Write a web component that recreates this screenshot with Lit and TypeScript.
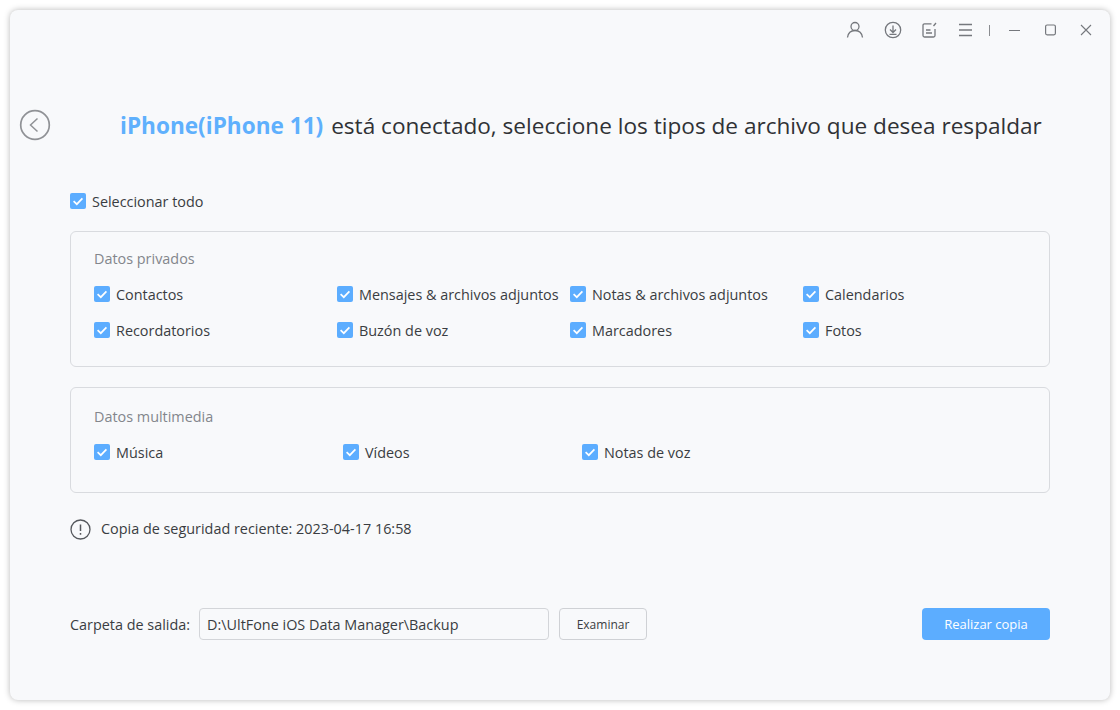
import { LitElement, html, css, svg } from "lit";
import { customElement } from "lit/decorators.js";

const check = (label: string, cls = "") => html`<label class="chk ${cls}">
  <span class="box"><svg width="16" height="16" viewBox="0 0 16 16"><path d="M3.6 8.2 6.8 11.2 12.4 5.4" fill="none" stroke="#fff" stroke-width="1.7"/></svg></span>
  <span>${label}</span>
</label>`;

const icon = (w: number, body: unknown) => html`<svg class="ic" width="${w}" height="20" viewBox="0 0 ${w} 20" fill="none" stroke="#75787d" stroke-width="1.3">${body}</svg>`;

@customElement("app-root")
export class AppRoot extends LitElement {
  static styles = css`
    :host { display: block; width: 1120px; height: 710px; background: #fff; padding: 10px; box-sizing: border-box;
      font-family: "Open Sans", "Noto Sans", sans-serif; color: #3a3d42; font-size: 14.4px; }
    .win { width: 1100px; height: 690px; background: #f8f9fb; border-radius: 8px; box-sizing: border-box;
      box-shadow: 0 0 6px rgba(0,0,0,.28); display: flex; flex-direction: column; padding: 0 60px; }
    .bar { height: 40px; display: flex; align-items: center; justify-content: flex-end; margin-right: -44px; }
    .bar .ic { display: block; }
    .u { margin-right: 19px; } .d { margin-right: 18px; } .n { margin-right: 20px; } .m { margin-right: 17px; }
    .sep { width: 1px; height: 11px; background: #8a8c90; margin-right: 19px; }
    .mn { margin-right: 25px; } .mx { margin-right: 21px; }
    .head { height: 62px; margin-top: 44px; display: flex; align-items: center; margin-left: -51px; }
    .back { flex: none; display: block; }
    .title { margin-left: 69px; font-size: 22.6px; white-space: nowrap; color: #303236; }
    .title b { font-weight: 700; color: #5fb0fd; margin-right: 2px; }
    .all { height: 20px; margin-top: 35px; }
    .chk { display: flex; align-items: center; gap: 6px; height: 20px; white-space: nowrap; }
    .box { width: 16px; height: 16px; background: #5cadff; border-radius: 2px; flex: none; display: block; }
    .box svg { display: block; }
    .card { border: 1px solid #d9dbdf; border-radius: 6px; padding: 0 23px; box-sizing: border-box; }
    .c1 { height: 136px; margin-top: 20px; }
    .c2 { height: 106px; margin-top: 20px; }
    .lbl { color: #83868c; height: 20px; line-height: 20px; margin-top: 17px; }
    .c2 .lbl { margin-top: 19px; }
    .row { display: flex; height: 20px; margin-top: 16px; }
    .lbl + .row { margin-top: 15px; }
    .c1 .chk:nth-child(1) { width: 243px; }
    .c1 .chk:nth-child(2), .c1 .chk:nth-child(3) { width: 233px; }
    .c2 .chk:nth-child(1) { width: 249px; }
    .c2 .chk:nth-child(2) { width: 239px; }
    .note { display: flex; align-items: center; gap: 10px; height: 22px; margin-top: 25px; }
    .note svg { display: block; }
    .note span { line-height: 20px; margin-bottom: 1px; }
    .foot { display: flex; align-items: center; height: 32px; margin-top: 68px; }
    .input { width: 350px; height: 32px; box-sizing: border-box; border: 1px solid #d3d5d9; border-radius: 4px; margin-left: 9px;
      padding-left: 7px; line-height: 32px; }
    .btn { width: 88px; height: 32px; box-sizing: border-box; border: 1px solid #cfd1d5; border-radius: 4px; margin-left: 10px;
      text-align: center; line-height: 31px; font-size: 12px; }
    .go { width: 128px; height: 32px; margin-left: auto; background: #5cadff; color: #fff; border-radius: 4px; text-align: center; line-height: 32px; font-size: 13px; }
  `;

  render() {
    return html`<div class="win">
      <div class="bar">
        <span class="u">${icon(20, svg`<circle cx="10" cy="6.5" r="4"/><path d="M2.5 17.5c.6-4.5 3.6-7 7.5-7s6.900 2.500 7.500 7"/>`)}</span>
        <span class="d">${icon(18, svg`<circle cx="9" cy="10" r="7.700"/><path d="M9 5.500v6.500M6 9.500 9 12.500 12 9.500M5.500 14.300h7"/>`)}</span>
        <span class="n">${icon(18, svg`<path d="M11.500 3.800H4.500a1.500 1.500 0 0 0-1.500 1.500v10.200a1.500 1.500 0 0 0 1.500 1.500h9a1.500 1.500 0 0 0 1.500-1.500V9M6 10h4.500M6 13h6M13.500 6 16 3"/>`)}</span>
        <span class="m">${icon(14, svg`<path d="M1 4.500h13M1 10h13M1 15.500h13" stroke-width="1.600"/>`)}</span>
        <span class="sep"></span>
        <span class="mn">${icon(11, svg`<path d="M0 10.500h11" stroke-width="1"/>`)}</span>
        <span class="mx">${icon(12, svg`<rect x=".6" y="5" width="9.800" height="9.800" rx="1.500" stroke-width="1.200"/>`)}</span>
        <span>${icon(16, svg`<path d="M3 5 13 15M13 5 3 15" stroke-width="1.100"/>`)}</span>
      </div>
      <div class="head">
        <svg class="back" width="32" height="32" viewBox="0 0 32 32" fill="none" stroke="#909296"><circle cx="16" cy="16" r="14.300" stroke-width="1.700"/><path d="M18.500 9.500 11.500 16l7 6.500" stroke-width="1.500"/></svg>
        <div class="title"><b>iPhone(iPhone 11)</b> está conectado, seleccione los tipos de archivo que desea respaldar</div>
      </div>
      <div class="all">${check("Seleccionar todo")}</div>
      <div class="card c1">
        <div class="lbl">Datos privados</div>
        <div class="row">${check("Contactos")}${check("Mensajes & archivos adjuntos")}${check("Notas & archivos adjuntos")}${check("Calendarios")}</div>
        <div class="row">${check("Recordatorios")}${check("Buzón de voz")}${check("Marcadores")}${check("Fotos")}</div>
      </div>
      <div class="card c2">
        <div class="lbl">Datos multimedia</div>
        <div class="row">${check("Música")}${check("Vídeos")}${check("Notas de voz")}</div>
      </div>
      <div class="note">
        <svg width="21" height="21" viewBox="0 0 21 21" fill="none" stroke="#55585d"><circle cx="10.500" cy="10.500" r="9.500" stroke-width="1.300"/><path d="M10.500 5.500v6.500M10.500 14v1.700" stroke-width="1.500"/></svg>
        <span>Copia de seguridad reciente: 2023-04-17 16:58</span>
      </div>
      <div class="foot">
        <span>Carpeta de salida:</span>
        <div class="input">D:\\UltFone iOS Data Manager\\Backup</div>
        <div class="btn">Examinar</div>
        <div class="go">Realizar copia</div>
      </div>
    </div>`;
  }
}
